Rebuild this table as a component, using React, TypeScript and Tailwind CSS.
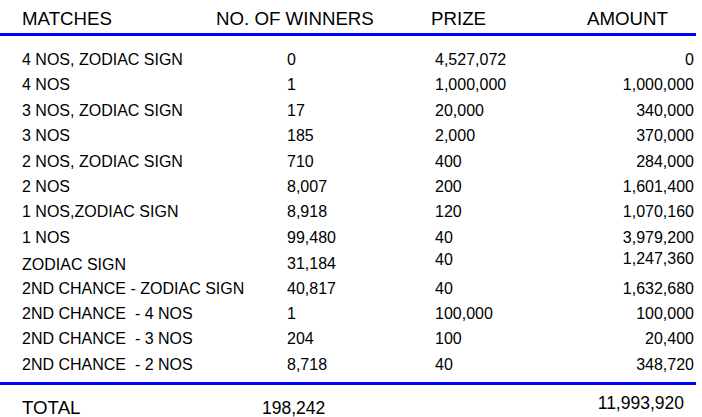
const ROWS: { match: string; winners: string; prize: string; amount: string; offsets?: string[] }[] = [
  { match: "4 NOS, ZODIAC SIGN", winners: "0", prize: "4,527,072", amount: "0" },
  { match: "4 NOS", winners: "1", prize: "1,000,000", amount: "1,000,000" },
  { match: "3 NOS, ZODIAC SIGN", winners: "17", prize: "20,000", amount: "340,000" },
  { match: "3 NOS", winners: "185", prize: "2,000", amount: "370,000" },
  { match: "2 NOS, ZODIAC SIGN", winners: "710", prize: "400", amount: "284,000" },
  { match: "2 NOS", winners: "8,007", prize: "200", amount: "1,601,400" },
  { match: "1 NOS,ZODIAC SIGN", winners: "8,918", prize: "120", amount: "1,070,160" },
  { match: "1 NOS", winners: "99,480", prize: "40", amount: "3,979,200" },
  {
    match: "ZODIAC SIGN",
    winners: "31,184",
    prize: "40",
    amount: "1,247,360",
    // cells in this row sit a little out of line in the original
    offsets: ["mt-[2px]", "mt-[1px]", "-mt-[3px]", "-mt-[4px]"],
  },
  { match: "2ND CHANCE - ZODIAC SIGN", winners: "40,817", prize: "40", amount: "1,632,680" },
  { match: "2ND CHANCE  - 4 NOS", winners: "1", prize: "100,000", amount: "100,000" },
  { match: "2ND CHANCE  - 3 NOS", winners: "204", prize: "100", amount: "20,400" },
  { match: "2ND CHANCE  - 2 NOS", winners: "8,718", prize: "40", amount: "348,720" },
];

export default function App() {
  return (
    <div className="w-[702px] h-[417px] overflow-hidden bg-white text-black font-['Liberation_Sans',Arial,sans-serif]">
      {/* header */}
      <div className="pt-[7px] pl-[22px] grid grid-cols-[194px_215px_156px_auto] text-[18.7px] leading-[24px]">
        <span>MATCHES</span>
        <span>NO. OF WINNERS</span>
        <span>PRIZE</span>
        <span>AMOUNT</span>
      </div>
      <div className="mt-[2px] h-[3px] w-[696px] bg-[#0000ff]" />

      {/* body */}
      <div className="pt-[11px] pl-[22px] pr-[8px] text-[16px] leading-[25.4px]">
        {ROWS.map((r) => {
          const o = r.offsets || ["", "", "", ""];
          return (
            <div key={r.match} className="grid grid-cols-[265px_148px_140px_1fr] h-[25.4px] items-start">
              <span className={`whitespace-pre ${o[0]}`}>{r.match}</span>
              <span className={o[1]}>{r.winners}</span>
              <span className={o[2]}>{r.prize}</span>
              <span className={`text-right ${o[3]}`}>{r.amount}</span>
            </div>
          );
        })}
      </div>
      <div className="mt-[5px] h-[3px] w-[696px] bg-[#0000ff]" />

      {/* total */}
      <div className="mt-[11px] pl-[22px] pr-[18px] flex items-start leading-[24px]">
        <span className="w-[240px] text-[18.7px]">TOTAL</span>
        <span className="text-[17.5px]">198,242</span>
        <span className="ml-auto -mt-[5px] text-[17.5px]">11,993,920</span>
      </div>
    </div>
  );
}
